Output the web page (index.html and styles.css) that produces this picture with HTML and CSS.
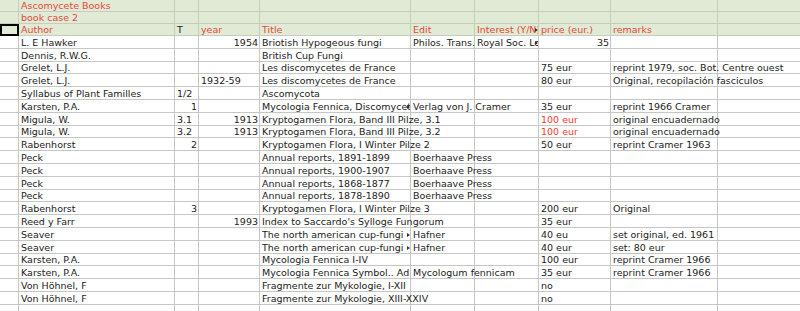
FILE: index.html
```html
<!DOCTYPE html>
<html>
<head>
<meta charset="utf-8">
<link rel="stylesheet" href="styles.css">
</head>
<body>
<div class="sheet">
  <div class="row hdr r1"><div class="c"></div><div class="c red">Ascomycete Books</div><div class="c"></div><div class="c"></div><div class="c"></div><div class="c"></div><div class="c"></div><div class="c"></div><div class="c"></div><div class="c"></div></div>
  <div class="row hdr"><div class="c"></div><div class="c red">book case 2</div><div class="c"></div><div class="c"></div><div class="c"></div><div class="c"></div><div class="c"></div><div class="c"></div><div class="c"></div><div class="c"></div></div>
  <div class="row hdr"><div class="c sel"></div><div class="c red">Author</div><div class="c">T</div><div class="c red">year</div><div class="c red">Title</div><div class="c red">Edit</div><div class="c red clip">Interest (Y/N)</div><div class="c red">price (eur.)</div><div class="c red">remarks</div><div class="c"></div></div>

  <div class="row d"><div class="c"></div><div class="c">L. E Hawker</div><div class="c"></div><div class="c r">1954</div><div class="c">Briotish Hypogeous fungi</div><div class="c">Philos. Trans.</div><div class="c clip">Royal Soc. London</div><div class="c r">35</div><div class="c"></div><div class="c"></div></div>
  <div class="row d"><div class="c"></div><div class="c">Dennis, R.W.G.</div><div class="c"></div><div class="c"></div><div class="c">British Cup Fungi</div><div class="c"></div><div class="c"></div><div class="c"></div><div class="c"></div><div class="c"></div></div>
  <div class="row d"><div class="c"></div><div class="c">Grelet, L.J.</div><div class="c"></div><div class="c"></div><div class="c">Les discomycetes de France</div><div class="c"></div><div class="c"></div><div class="c">75 eur</div><div class="c">reprint 1979, soc. Bot. Centre ouest</div><div class="c"></div></div>
  <div class="row d"><div class="c"></div><div class="c">Grelet, L.J.</div><div class="c"></div><div class="c">1932-59</div><div class="c">Les discomycetes de France</div><div class="c"></div><div class="c"></div><div class="c">80 eur</div><div class="c">Original, recopilación fasciculos</div><div class="c"></div></div>
  <div class="row d"><div class="c"></div><div class="c">Syllabus of Plant Familles</div><div class="c">1/2</div><div class="c"></div><div class="c">Ascomycota</div><div class="c"></div><div class="c"></div><div class="c"></div><div class="c"></div><div class="c"></div></div>
  <div class="row d"><div class="c"></div><div class="c">Karsten, P.A.</div><div class="c r">1</div><div class="c"></div><div class="c clip">Mycologia Fennica, Discomycetes</div><div class="c">Verlag von J. Cramer</div><div class="c"></div><div class="c">35 eur</div><div class="c">reprint 1966 Cramer</div><div class="c"></div></div>
  <div class="row d"><div class="c"></div><div class="c">Migula, W.</div><div class="c">3.1</div><div class="c r">1913</div><div class="c">Kryptogamen Flora, Band III Pilze, 3.1</div><div class="c"></div><div class="c"></div><div class="c red2">100 eur</div><div class="c">original encuadernado</div><div class="c"></div></div>
  <div class="row d"><div class="c"></div><div class="c">Migula, W.</div><div class="c">3.2</div><div class="c r">1913</div><div class="c">Kryptogamen Flora, Band III Pilze, 3.2</div><div class="c"></div><div class="c"></div><div class="c red2">100 eur</div><div class="c">original encuadernado</div><div class="c"></div></div>
  <div class="row d"><div class="c"></div><div class="c">Rabenhorst</div><div class="c r">2</div><div class="c"></div><div class="c">Kryptogamen Flora, I Winter Pilze 2</div><div class="c"></div><div class="c"></div><div class="c">50 eur</div><div class="c">reprint Cramer 1963</div><div class="c"></div></div>
  <div class="row d"><div class="c"></div><div class="c">Peck</div><div class="c"></div><div class="c"></div><div class="c">Annual reports, 1891-1899</div><div class="c">Boerhaave Press</div><div class="c"></div><div class="c"></div><div class="c"></div><div class="c"></div></div>
  <div class="row d"><div class="c"></div><div class="c">Peck</div><div class="c"></div><div class="c"></div><div class="c">Annual reports, 1900-1907</div><div class="c">Boerhaave Press</div><div class="c"></div><div class="c"></div><div class="c"></div><div class="c"></div></div>
  <div class="row d"><div class="c"></div><div class="c">Peck</div><div class="c"></div><div class="c"></div><div class="c">Annual reports, 1868-1877</div><div class="c">Boerhaave Press</div><div class="c"></div><div class="c"></div><div class="c"></div><div class="c"></div></div>
  <div class="row d"><div class="c"></div><div class="c">Peck</div><div class="c"></div><div class="c"></div><div class="c">Annual reports, 1878-1890</div><div class="c">Boerhaave Press</div><div class="c"></div><div class="c"></div><div class="c"></div><div class="c"></div></div>
  <div class="row d"><div class="c"></div><div class="c">Rabenhorst</div><div class="c r">3</div><div class="c"></div><div class="c">Kryptogamen Flora, I Winter Pilze 3</div><div class="c"></div><div class="c"></div><div class="c">200 eur</div><div class="c">Original</div><div class="c"></div></div>
  <div class="row d"><div class="c"></div><div class="c">Reed y Farr</div><div class="c"></div><div class="c r">1993</div><div class="c">Index to Saccardo's Sylloge Fungorum</div><div class="c"></div><div class="c"></div><div class="c">35 eur</div><div class="c"></div><div class="c"></div></div>
  <div class="row d"><div class="c"></div><div class="c">Seaver</div><div class="c"></div><div class="c"></div><div class="c clip">The north american cup-fungi</div><div class="c">Hafner</div><div class="c"></div><div class="c">40 eu</div><div class="c">set original, ed. 1961</div><div class="c"></div></div>
  <div class="row d"><div class="c"></div><div class="c">Seaver</div><div class="c"></div><div class="c"></div><div class="c clip">The north american cup-fungi</div><div class="c">Hafner</div><div class="c"></div><div class="c">40 eur</div><div class="c">set: 80 eur</div><div class="c"></div></div>
  <div class="row d"><div class="c"></div><div class="c">Karsten, P.A.</div><div class="c"></div><div class="c"></div><div class="c">Mycologia Fennica I-IV</div><div class="c"></div><div class="c"></div><div class="c">100 eur</div><div class="c">reprint Cramer 1966</div><div class="c"></div></div>
  <div class="row d"><div class="c"></div><div class="c">Karsten, P.A.</div><div class="c"></div><div class="c"></div><div class="c">Mycologia Fennica Symbol.. Ad</div><div class="c">Mycologum fennicam</div><div class="c"></div><div class="c">35 eur</div><div class="c">reprint Cramer 1966</div><div class="c"></div></div>
  <div class="row d"><div class="c"></div><div class="c">Von Höhnel, F</div><div class="c"></div><div class="c"></div><div class="c">Fragmente zur Mykologie, I-XII</div><div class="c"></div><div class="c"></div><div class="c">no</div><div class="c"></div><div class="c"></div></div>
  <div class="row d"><div class="c"></div><div class="c">Von Höhnel, F</div><div class="c"></div><div class="c"></div><div class="c">Fragmente zur Mykologie, XIII-XXIV</div><div class="c"></div><div class="c"></div><div class="c">no</div><div class="c"></div><div class="c"></div></div>
  <div class="row d"><div class="c"></div><div class="c"></div><div class="c"></div><div class="c"></div><div class="c"></div><div class="c"></div><div class="c"></div><div class="c"></div><div class="c"></div><div class="c"></div></div>
</div>
</body>
</html>
```
FILE: styles.css
```css
html, body {
  margin: 0;
  padding: 0;
  background: #fff;
  overflow: hidden;
}
.sheet {
  width: 800px;
  height: 311px;
  overflow: hidden;
  font-family: "DejaVu Sans", sans-serif;
  font-size: 9.5px;
  color: #222;
}
.row {
  display: grid;
  grid-template-columns: 19px 156px 24px 61px 151px 64px 64px 72px 107px 82px;
  height: 12px;
}
.row.d {
  height: 12.8px;
}
.hdr {
  background: #e0ead5;
}
.c {
  box-sizing: border-box;
  border-right: 1px solid #c6c6c6;
  border-bottom: 1px solid #c6c6c6;
  display: flex;
  align-items: flex-end;
  padding: 0 1px 0 2px;
  line-height: 10px;
  white-space: nowrap;
  min-width: 0;
}
.hdr .c {
  border-color: #c5cdbd;
}
.c:last-child {
  border-right: none;
}
.r {
  justify-content: flex-end;
}
.red {
  color: #e5493a;
}
.red2 {
  color: #ff3a30;
}
.clip {
  overflow: hidden;
  position: relative;
}
.clip::after {
  content: "";
  position: absolute;
  right: 0;
  bottom: 3px;
  width: 0;
  height: 0;
  border-left: 3px solid #333;
  border-top: 2.5px solid transparent;
  border-bottom: 2.5px solid transparent;
}
.sel {
  outline: 2px solid #000;
  outline-offset: -2px;
}
```
